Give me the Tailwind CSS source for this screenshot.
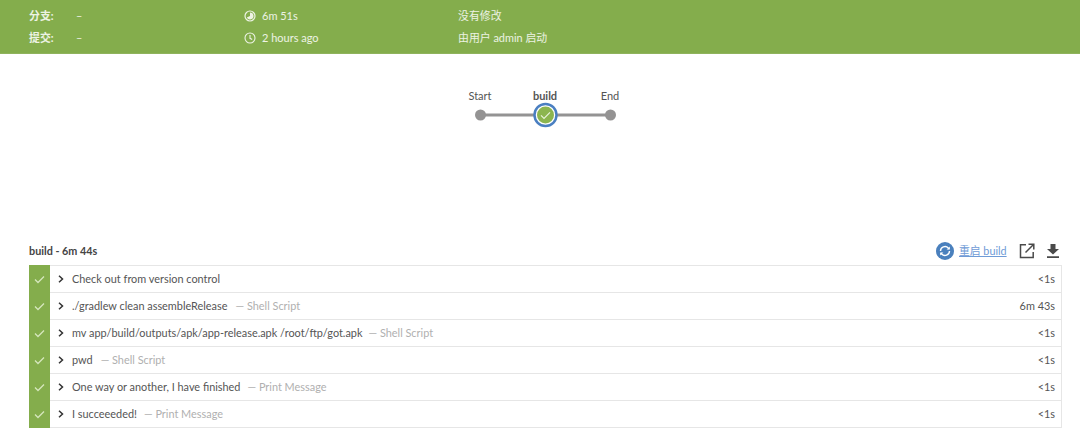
<!DOCTYPE html>
<html lang="en">
  <head>
    <meta charset="UTF-8" />
    <title>build</title>
    <script src="https://cdn.jsdelivr.net/npm/@tailwindcss/browser@4"></script>
  </head>
  <body class="bg-white h-[437px] overflow-hidden font-['Lato','Noto_Sans_CJK_SC',sans-serif] text-[10.9px] text-[#555]">
    <!-- run summary -->
    <header class="h-[54px] bg-[#84ad4c] text-white/85 pl-[29px] pt-[5px] border-b border-[#8fb35c]">
      <div class="flex h-[22px] items-center">
        <span class="w-[47px] font-bold">分支:</span>
        <span class="w-[168px]">–</span>
        <svg class="w-[12px] h-[12px] mr-[6px]" viewBox="0 0 12 12"><circle cx="6" cy="6" r="5" fill="none" stroke="currentColor" stroke-width="1.2"/><path d="M6 2.5A3.5 3.5 0 1 1 2.8 7.4L6 6z" fill="currentColor"/></svg>
        <span class="w-[196px] text-[11px]">6m 51s</span>
        <span>没有修改</span>
      </div>
      <div class="flex h-[22px] items-center">
        <span class="w-[47px] font-bold">提交:</span>
        <span class="w-[168px]">–</span>
        <svg class="w-[12px] h-[12px] mr-[6px]" viewBox="0 0 12 12" fill="none" stroke="currentColor" stroke-width="1.1"><circle cx="6" cy="6" r="5"/><path d="M6 3v3.3l2.2 1.2"/></svg>
        <span class="w-[196px] text-[11px]">2 hours ago</span>
        <span>由用户 admin 启动</span>
      </div>
    </header>

    <!-- pipeline graph -->
    <div class="h-[186px] flex justify-center pt-[34px]">
      <div class="relative w-[160px] h-[50px] ml-[10px] text-[11px]">
        <svg class="absolute left-0 top-0" width="160" height="50" viewBox="0 0 160 50">
          <path d="M15 27H145" stroke="#949393" stroke-width="3"/>
          <circle cx="15.5" cy="27" r="5.5" fill="#949393"/>
          <circle cx="145.5" cy="27" r="5.5" fill="#949393"/>
          <circle cx="80.5" cy="27" r="11" fill="#fff" stroke="#4a7fc1" stroke-width="2.5"/>
          <circle cx="80.5" cy="27" r="8.5" fill="#8cb54f"/>
          <path d="M76 27.3l3 3 6-6" fill="none" stroke="#e8f2da" stroke-width="1.2"/>
        </svg>
        <span class="absolute left-0 w-[30px] top-0 text-center">Start</span>
        <span class="absolute left-[60px] w-[40px] top-0 text-center font-bold">build</span>
        <span class="absolute left-[130px] w-[30px] top-0 text-center">End</span>
      </div>
    </div>

    <!-- steps -->
    <section class="pl-[29px] pr-[18px]">
      <div class="flex items-center h-[22px] mb-[3px]">
        <span class="font-bold text-[#444] text-[10.8px]">build - 6m 44s</span>
        <div class="ml-auto flex items-center mr-[2px]">
          <svg class="w-[18px] h-[18px] mr-[5px]" viewBox="0 0 18 18"><circle cx="9" cy="9" r="9" fill="#4a80bd"/><path d="M4.5 9a4.5 4.5 0 0 1 7.8-3l1 1M13.5 9a4.5 4.5 0 0 1-7.8 3l-1-1" fill="none" stroke="#fff" stroke-width="1.4"/><path d="M13.8 4.4v3.2h-3.2zM4.2 13.6v-3.2h3.2z" fill="#fff"/></svg>
          <span class="text-[#6f9bd6] underline w-[48px] whitespace-nowrap text-[10.8px]">重启 build</span>
          <svg class="w-[16px] h-[16px] ml-[12px]" viewBox="0 0 16 16" fill="none" stroke="#4a4a4a" stroke-width="1.5"><path d="M7 1.8H1.5v12.7h12.7V9M9.5 1.2h5.3v5.3M14.5 1.5L6.5 9.5"/></svg>
          <svg class="w-[14px] h-[14px] ml-[11px]" viewBox="0 0 14 14" fill="#4a4a4a"><path d="M4.5 0h5v5H13L7 10.5 1 5h3.5zM1 12.2h12V14H1z"/></svg>
        </div>
      </div>

      <div class="flex flex-col">
        <div class="flex h-[28px] items-stretch">
          <div class="w-[21px] bg-[#84ad4c] flex items-center justify-center"><svg width="11" height="9" viewBox="0 0 11 9" fill="none" stroke="#d5e6bd" stroke-width="1.3"><path d="M1 4.5l3 3 6-6"/></svg></div>
          <div class="flex-1 flex items-center border-y border-r border-[#e6e6e6] pl-[8px] pr-[6px]">
            <svg class="w-[6px] h-[8px] mr-[8px]" viewBox="0 0 6 8" fill="none" stroke="#333" stroke-width="1.5"><path d="M1 .8L4.5 4 1 7.2"/></svg>
            <span>Check out from version control</span>
            <span class="ml-auto">&lt;1s</span>
          </div>
        </div>
        <div class="flex h-[27px] items-stretch">
          <div class="w-[21px] bg-[#84ad4c] flex items-center justify-center"><svg width="11" height="9" viewBox="0 0 11 9" fill="none" stroke="#d5e6bd" stroke-width="1.3"><path d="M1 4.5l3 3 6-6"/></svg></div>
          <div class="flex-1 flex items-center border-b border-r border-[#e6e6e6] pl-[8px] pr-[6px]">
            <svg class="w-[6px] h-[8px] mr-[8px]" viewBox="0 0 6 8" fill="none" stroke="#333" stroke-width="1.5"><path d="M1 .8L4.5 4 1 7.2"/></svg>
            <span>./gradlew clean assembleRelease</span>
            <span class="ml-[8px] text-[#b0b0b0]">— Shell Script</span>
            <span class="ml-auto">6m 43s</span>
          </div>
        </div>
        <div class="flex h-[27px] items-stretch">
          <div class="w-[21px] bg-[#84ad4c] flex items-center justify-center"><svg width="11" height="9" viewBox="0 0 11 9" fill="none" stroke="#d5e6bd" stroke-width="1.3"><path d="M1 4.5l3 3 6-6"/></svg></div>
          <div class="flex-1 flex items-center border-b border-r border-[#e6e6e6] pl-[8px] pr-[6px]">
            <svg class="w-[6px] h-[8px] mr-[8px]" viewBox="0 0 6 8" fill="none" stroke="#333" stroke-width="1.5"><path d="M1 .8L4.5 4 1 7.2"/></svg>
            <span>mv app/build/outputs/apk/app-release.apk /root/ftp/got.apk</span>
            <span class="ml-[6px] text-[#b0b0b0]">— Shell Script</span>
            <span class="ml-auto">&lt;1s</span>
          </div>
        </div>
        <div class="flex h-[27px] items-stretch">
          <div class="w-[21px] bg-[#84ad4c] flex items-center justify-center"><svg width="11" height="9" viewBox="0 0 11 9" fill="none" stroke="#d5e6bd" stroke-width="1.3"><path d="M1 4.5l3 3 6-6"/></svg></div>
          <div class="flex-1 flex items-center border-b border-r border-[#e6e6e6] pl-[8px] pr-[6px]">
            <svg class="w-[6px] h-[8px] mr-[8px]" viewBox="0 0 6 8" fill="none" stroke="#333" stroke-width="1.5"><path d="M1 .8L4.5 4 1 7.2"/></svg>
            <span>pwd</span>
            <span class="ml-[8px] text-[#b0b0b0]">— Shell Script</span>
            <span class="ml-auto">&lt;1s</span>
          </div>
        </div>
        <div class="flex h-[27px] items-stretch">
          <div class="w-[21px] bg-[#84ad4c] flex items-center justify-center"><svg width="11" height="9" viewBox="0 0 11 9" fill="none" stroke="#d5e6bd" stroke-width="1.3"><path d="M1 4.5l3 3 6-6"/></svg></div>
          <div class="flex-1 flex items-center border-b border-r border-[#e6e6e6] pl-[8px] pr-[6px]">
            <svg class="w-[6px] h-[8px] mr-[8px]" viewBox="0 0 6 8" fill="none" stroke="#333" stroke-width="1.5"><path d="M1 .8L4.5 4 1 7.2"/></svg>
            <span>One way or another, I have finished</span>
            <span class="ml-[7px] text-[#b0b0b0]">— Print Message</span>
            <span class="ml-auto">&lt;1s</span>
          </div>
        </div>
        <div class="flex h-[27px] items-stretch">
          <div class="w-[21px] bg-[#84ad4c] flex items-center justify-center"><svg width="11" height="9" viewBox="0 0 11 9" fill="none" stroke="#d5e6bd" stroke-width="1.3"><path d="M1 4.5l3 3 6-6"/></svg></div>
          <div class="flex-1 flex items-center border-b border-r border-[#e6e6e6] pl-[8px] pr-[6px]">
            <svg class="w-[6px] h-[8px] mr-[8px]" viewBox="0 0 6 8" fill="none" stroke="#333" stroke-width="1.5"><path d="M1 .8L4.5 4 1 7.2"/></svg>
            <span>I succeeeded!</span>
            <span class="ml-[7px] text-[#b0b0b0]">— Print Message</span>
            <span class="ml-auto">&lt;1s</span>
          </div>
        </div>
      </div>
    </section>
  </body>
</html>
